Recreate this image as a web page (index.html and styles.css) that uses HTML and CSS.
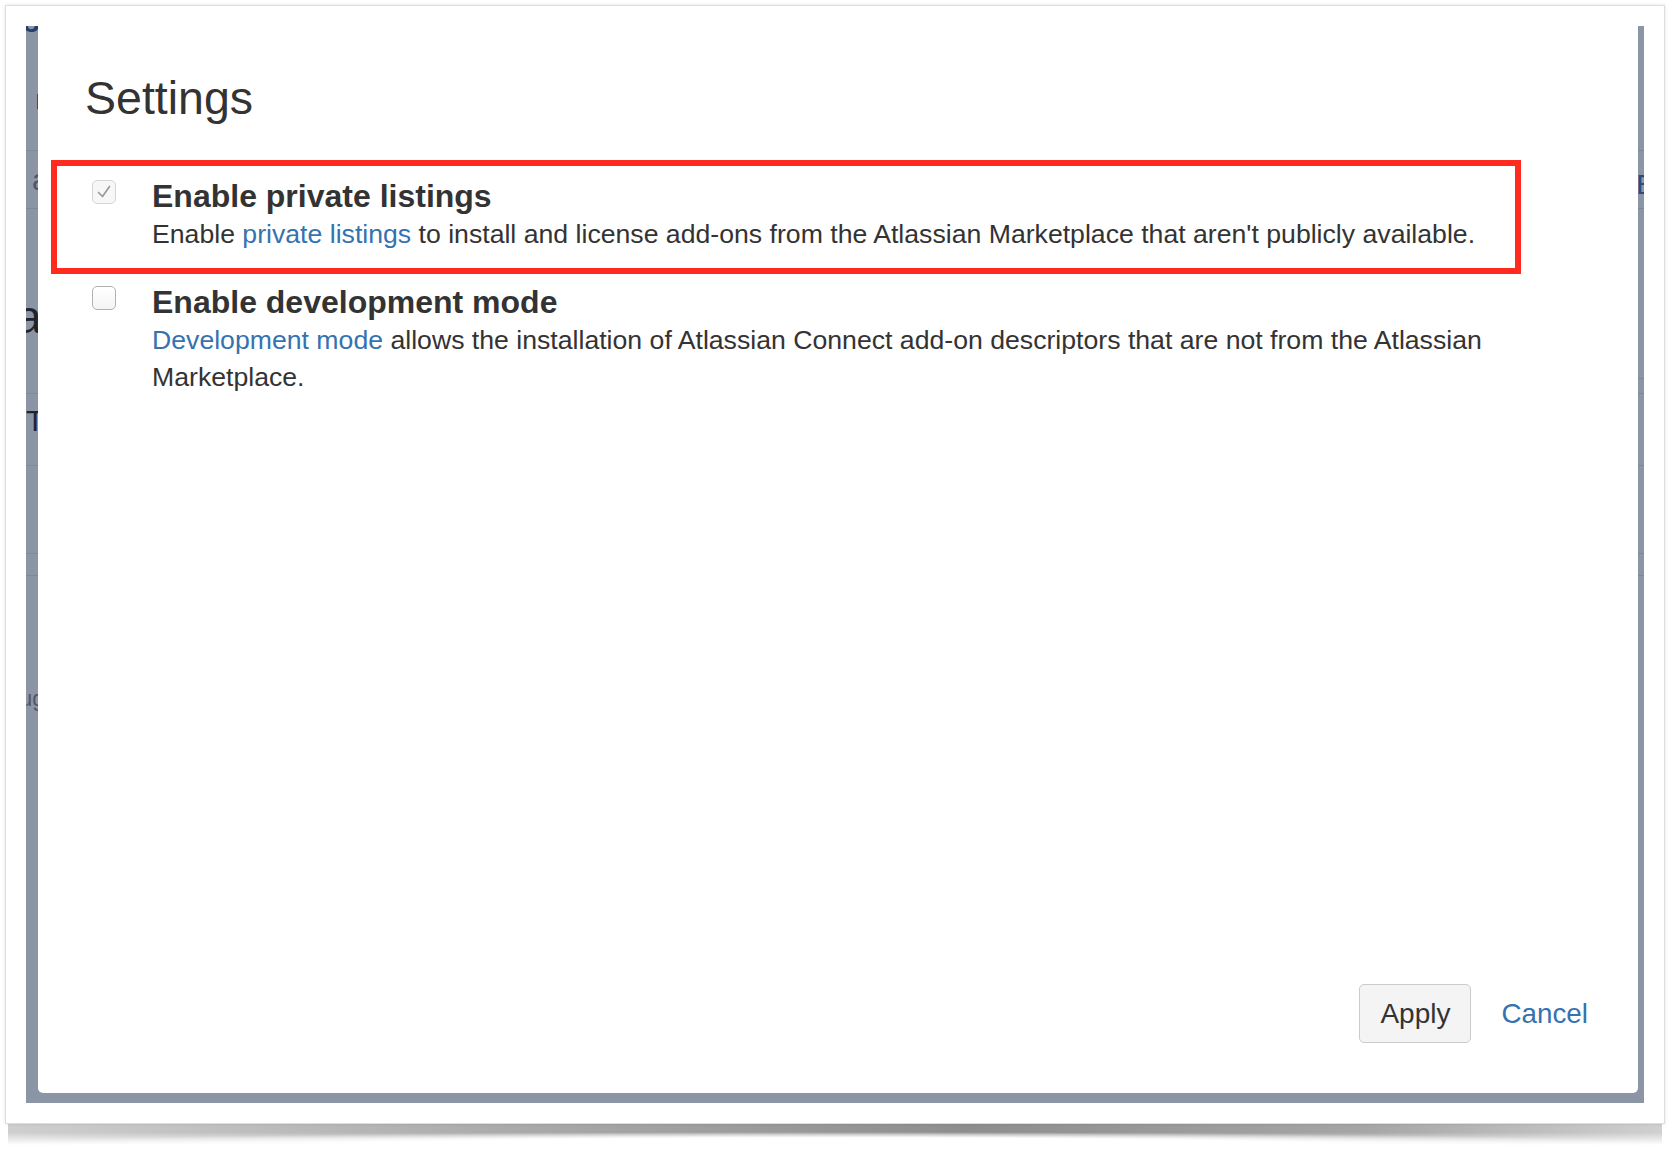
FILE: index.html
```html
<!DOCTYPE html>
<html>
<head>
    <title>Settings</title>
    <link rel="stylesheet" href="styles.css">
</head>
<body>
    <div class="frame">
        <div class="screen">
            <!-- page behind the modal, only a sliver shows -->
            <div class="page">
                <div class="page-row row-1">
                    <div class="page-left">
                        <span class="frag frag-logo">o</span>
                        <span class="frag frag-nav">b</span>
                    </div>
                </div>
                <div class="page-row row-2">
                    <div class="page-left">
                        <span class="frag frag-tab">a</span>
                    </div>
                    <span class="frag frag-right-e">E</span>
                </div>
                <div class="page-row row-3">
                    <div class="page-left">
                        <span class="frag frag-heading">a</span>
                    </div>
                    <div class="page-right-line"></div>
                </div>
                <div class="page-row row-4">
                    <div class="page-left">
                        <span class="frag frag-t">T</span>
                    </div>
                </div>
                <div class="page-row row-5"></div>
                <div class="page-row row-6"></div>
                <div class="page-row row-7">
                    <div class="page-left">
                        <span class="frag frag-ug">ug</span>
                    </div>
                </div>
            </div>

            <div class="dialog">
                <h2 class="dialog-title">Settings</h2>

                <div class="setting-list">
                    <div class="setting">
                        <span class="checkbox checkbox-checked">
                            <svg width="22" height="22" viewBox="0 0 22 22"><path d="M5.5 11.5 L9.5 15.5 L16.5 5.5" fill="none" stroke="#9a9a9a" stroke-width="1.7" stroke-linecap="round" stroke-linejoin="round"/></svg>
                        </span>
                        <div class="setting-text">
                            <h3 class="setting-title">Enable private listings</h3>
                            <p class="setting-desc">Enable <a href="#">private listings</a> to install and license add-ons from the Atlassian Marketplace that aren't publicly available.</p>
                        </div>
                    </div>

                    <div class="setting">
                        <span class="checkbox"></span>
                        <div class="setting-text">
                            <h3 class="setting-title">Enable development mode</h3>
                            <p class="setting-desc"><a href="#">Development mode</a> allows the installation of Atlassian Connect add-on descriptors that are not from the Atlassian Marketplace.</p>
                        </div>
                    </div>
                </div>

                <div class="dialog-footer">
                    <button class="button">Apply</button>
                    <a href="#" class="cancel">Cancel</a>
                </div>
            </div>

            <div class="highlight"></div>
        </div>
    </div>
    <div class="frame-shadow"></div>
</body>
</html>
```

FILE: styles.css
```css
body {
    margin: 0;
    padding: 5px 0 0 5px;
    background-color: #fff;
    font-family: "Liberation Sans", Arial, sans-serif;
}

.frame {
    position: relative;
    width: 1660px;
    box-sizing: border-box;
    padding: 20px;
    border: 1px solid #dedede;
    background-color: #fff;
    box-shadow: 0 0 3px rgba(0, 0, 0, 0.12);
}

/* curled paper shadow under the frame */
.frame-shadow {
    width: 1654px;
    height: 21px;
    margin-left: 3px;
    background:
        radial-gradient(ellipse 52% 62% at 50% 100%, #fff 55%, rgba(255, 255, 255, 0) 100%),
        linear-gradient(to bottom, rgba(255, 255, 255, 0) 40%, #fff 100%),
        linear-gradient(to right, #cfcfcf, #ababab 30%, #8e8e8e 58%, #a6a6a6 82%, #d0d0d0);
}

.screen {
    position: relative;
    height: 1077px;
    background-color: #8c95a6;
    overflow: hidden;
}

/* ---- dimmed page behind ---- */
.page-row {
    display: flex;
    justify-content: space-between;
    align-items: flex-start;
    box-sizing: border-box;
    border-bottom: 1px solid #7f8899;
}

.row-1 { height: 125px; }
.row-2 { height: 58px; }
.row-3 { height: 185px; }
.row-4 { height: 72px; }
.row-5 { height: 88px; }
.row-6 { height: 22px; }
.row-7 { border-bottom: none; }

.frag {
    display: block;
    color: #1e232d;
}

.frag-logo {
    margin: -19px 0 0 -4px;
    font-size: 30px;
    line-height: 30px;
    font-weight: bold;
    color: #22406d;
}

.frag-nav {
    margin: 55px 0 0 10px;
    font-size: 20px;
    line-height: 20px;
}

.frag-tab {
    margin: 14px 0 0 6px;
    font-size: 30px;
    line-height: 30px;
    color: #4f5667;
}

.frag-right-e {
    margin: 20px -11px 0 0;
    font-size: 28px;
    line-height: 28px;
    color: #2a4c80;
}

.frag-heading {
    margin: 85px 0 0 -10px;
    font-size: 46px;
    line-height: 46px;
}

.page-right-line {
    width: 6px;
    height: 169px;
    border-bottom: 1px solid #7f8899;
}

.frag-t {
    margin: 12px 0 0 0;
    font-size: 30px;
    line-height: 30px;
}

.frag-ug {
    margin: 112px 0 0 -6px;
    font-size: 22px;
    line-height: 22px;
    color: #4f5667;
}

/* ---- dialog ---- */
.dialog {
    position: absolute;
    top: 0;
    left: 12px;
    right: 6px;
    bottom: 10px;
    display: flex;
    flex-direction: column;
    box-sizing: border-box;
    padding: 44px 50px 50px 47px;
    background-color: #fff;
    border-radius: 0 0 5px 5px;
    color: #333;
}

.dialog-title {
    margin: 0;
    font-size: 46.5px;
    font-weight: normal;
    line-height: 56px;
}

.setting-list {
    display: flex;
    flex-direction: column;
    gap: 31px;
    margin: 52px 0 0 7px;
}

.setting {
    display: flex;
    align-items: flex-start;
    gap: 36px;
}

.checkbox {
    flex: none;
    display: flex;
    align-items: center;
    justify-content: center;
    width: 24px;
    height: 24px;
    margin-top: 2px;
    box-sizing: border-box;
    border: 1px solid #b1b1b1;
    border-radius: 5px;
    background: linear-gradient(#fff, #f4f4f4);
}

.checkbox-checked {
    border-color: #d6d6d6;
    background: #f7f7f7;
}

.setting-text {
    max-width: 1408px;
}

.setting-title {
    margin: 0 0 2px;
    font-size: 32px;
    line-height: 36px;
    font-weight: bold;
}

.setting-desc {
    margin: 0;
    font-size: 26.65px;
    line-height: 37px;
}

.setting-desc a {
    color: #3572b0;
    text-decoration: none;
}

.dialog-footer {
    display: flex;
    justify-content: flex-end;
    align-items: center;
    gap: 30px;
    margin-top: auto;
}

.button {
    padding: 11px 20px;
    font-family: inherit;
    font-size: 28px;
    line-height: 35px;
    color: #333;
    background-color: #f4f4f4;
    border: 1px solid #cbcbcb;
    border-radius: 5px;
    cursor: pointer;
}

.cancel {
    font-size: 27.8px;
    line-height: 35px;
    color: #3572b0;
    text-decoration: none;
}

/* red annotation box drawn over the screenshot */
.highlight {
    position: absolute;
    left: 25px;
    top: 134px;
    width: 1470px;
    height: 114px;
    box-sizing: border-box;
    border: 6px solid #fe2b1e;
}
```
